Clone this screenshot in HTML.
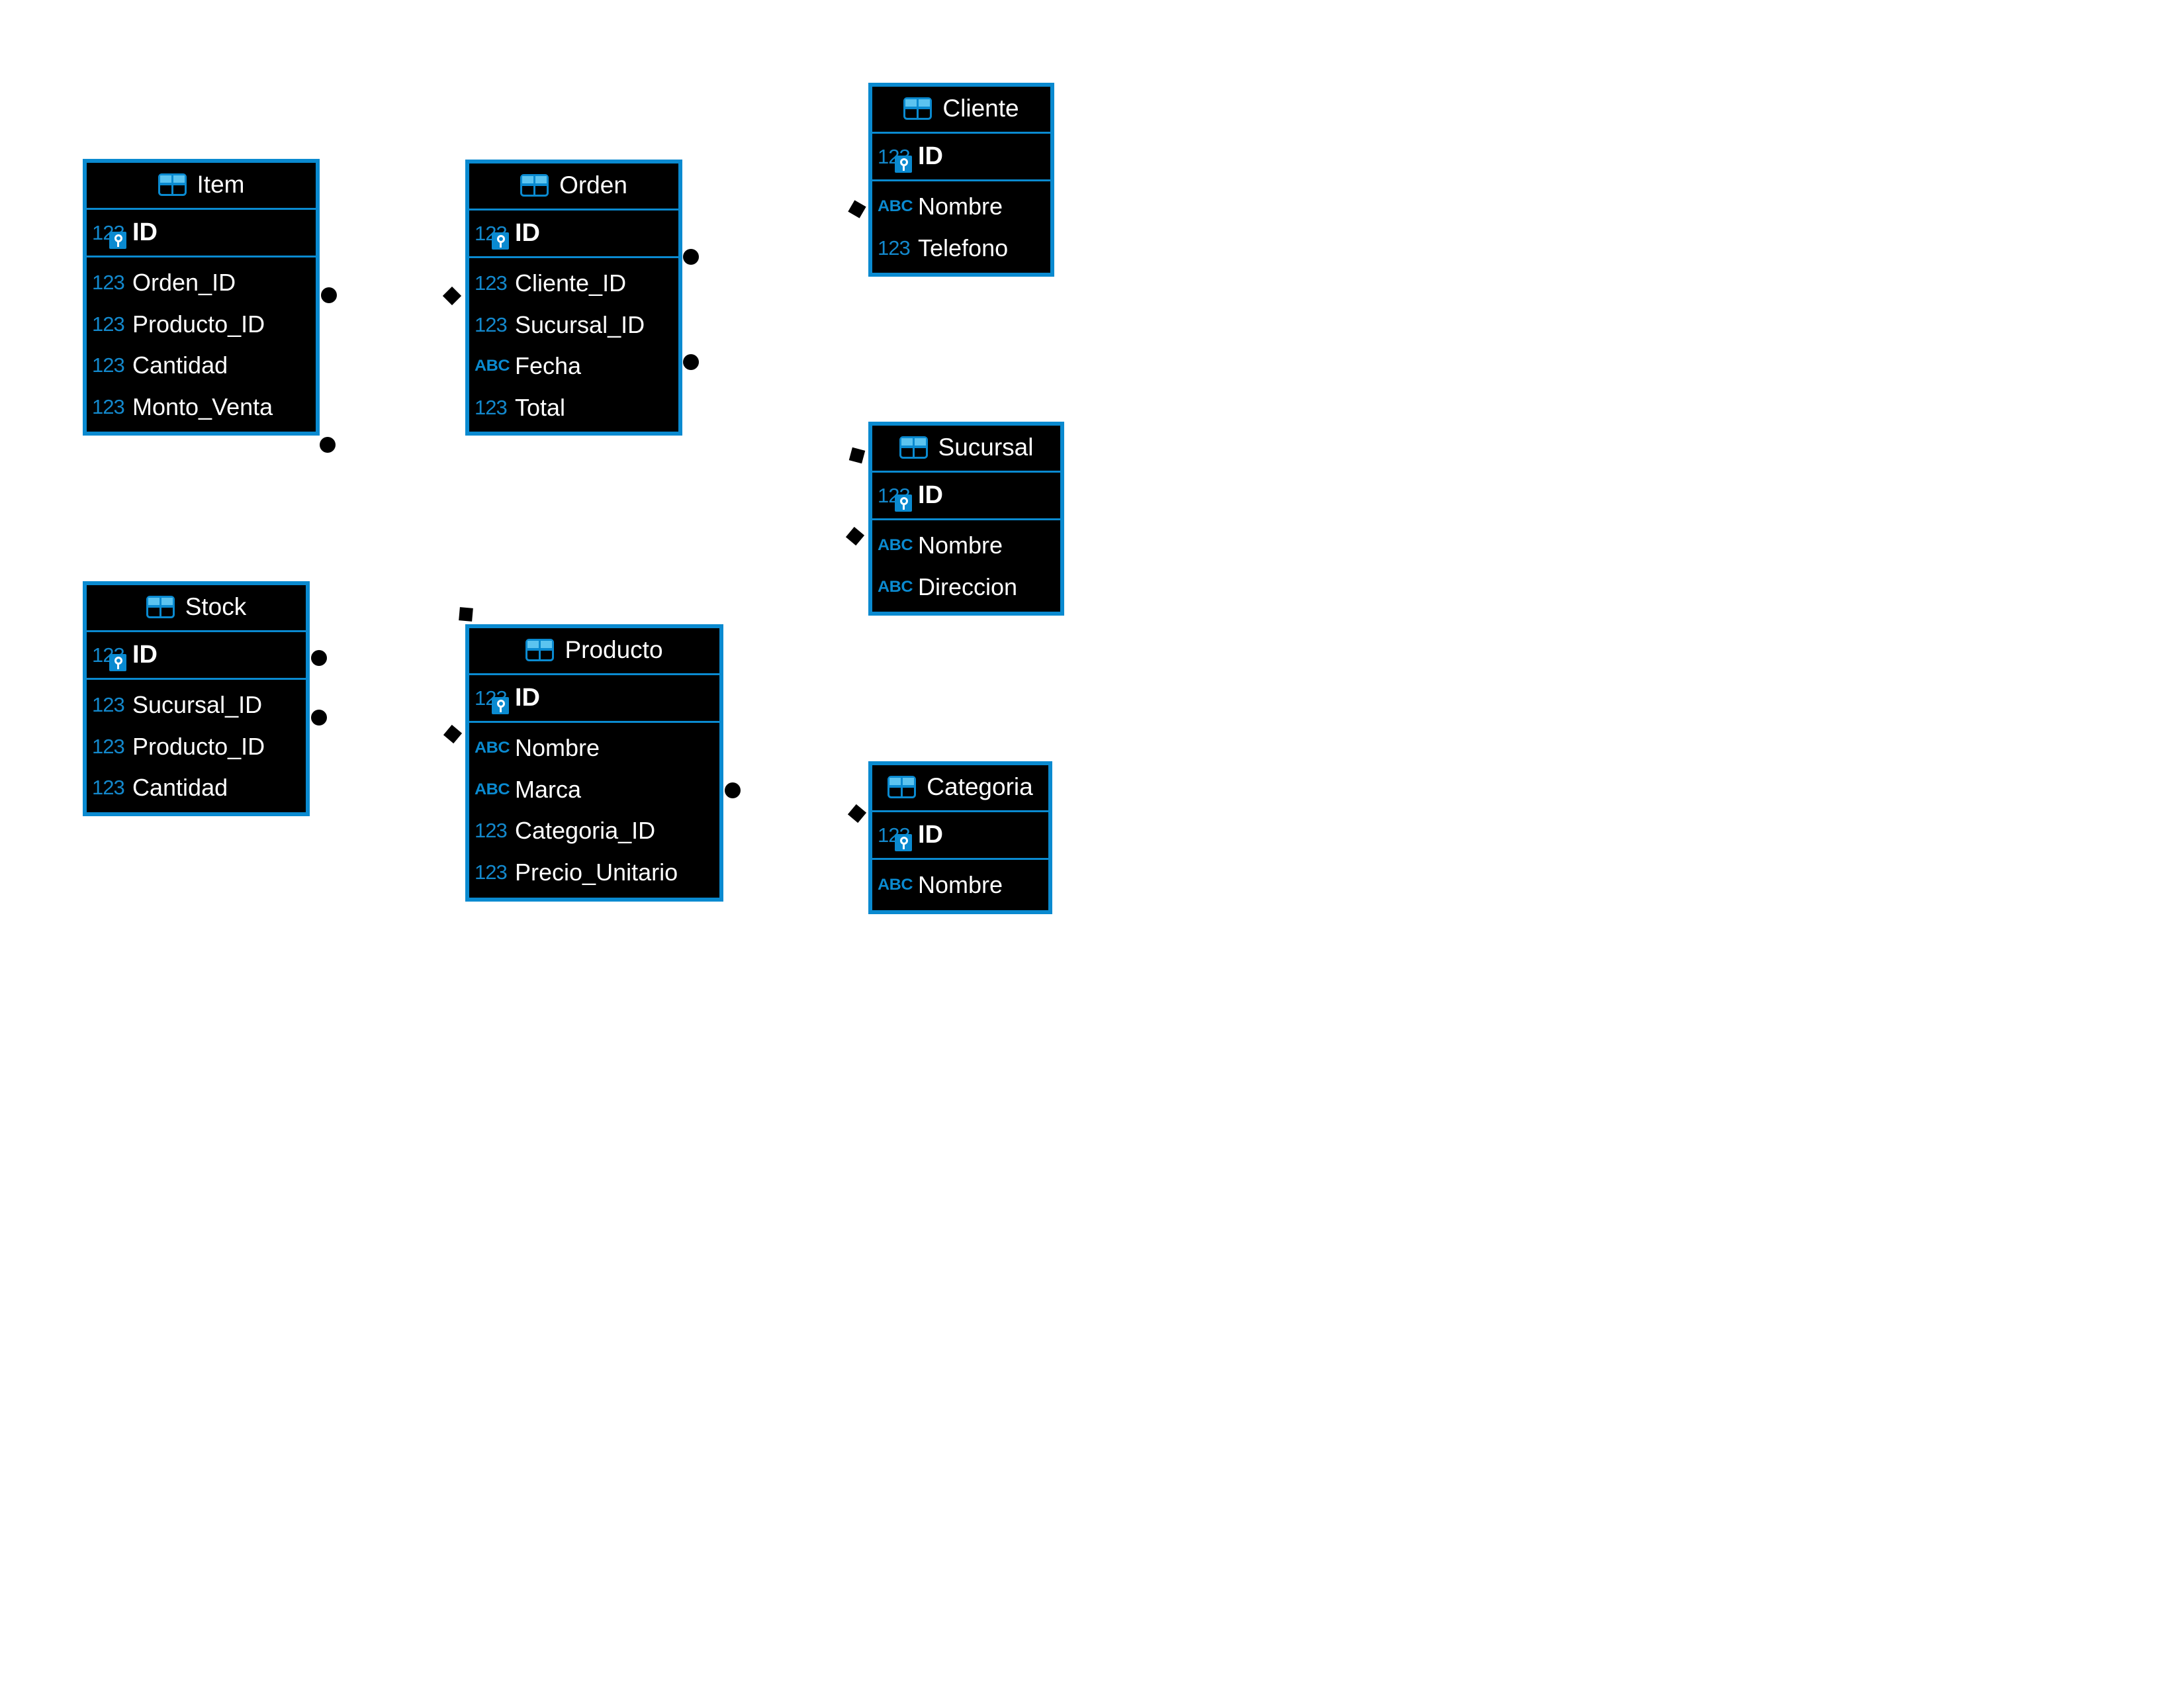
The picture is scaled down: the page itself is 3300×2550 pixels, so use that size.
<!DOCTYPE html>
<html><head><meta charset="utf-8"><style>
*{margin:0;padding:0;box-sizing:border-box}
body{width:3300px;height:2550px;background:#fff;position:relative;overflow:hidden;font-family:"Liberation Sans",sans-serif}
.t{position:absolute;background:#000;border:6px solid #0a8ad0}
.h{height:71px;border-bottom:3px solid #0a8ad0;display:flex;align-items:center;justify-content:center;color:#fff;font-size:37px;gap:16px;padding-bottom:3px}
.ti{width:43px;height:34px;position:relative}
.idr{height:72px;border-bottom:3px solid #0a8ad0;display:flex;align-items:center;padding-left:8px;color:#fff;font-weight:bold;font-size:38px}
.rows{padding-top:7px}
.r{height:62.5px;display:flex;align-items:center;padding-left:8px;color:#fff;font-size:36px;white-space:nowrap}
.n{color:#1388cc;font-size:31px;width:52px;margin-right:9px;letter-spacing:-1px;position:relative;display:inline-block;flex-shrink:0}
.a{color:#0a8ad0;font-size:24px;font-weight:bold;width:52px;margin-right:9px;display:inline-block;flex-shrink:0;letter-spacing:-0.5px;transform:scaleX(1.05);transform-origin:left}
.k{position:absolute;left:26px;top:16px;width:26px;height:26px;background:#0a8ad0;border-radius:2px}
.k:after{content:"";position:absolute;left:8px;top:4px;width:6px;height:6px;border:3px solid #fff;border-radius:50%}
.k:before{content:"";position:absolute;left:12px;top:14px;width:3px;height:9px;background:#fff}
.d{position:absolute;width:24px;height:24px;border-radius:50%;background:#000}
.m{position:absolute;width:20px;height:20px;background:#000;transform:rotate(45deg)}
</style></head><body>
<svg width="0" height="0" style="position:absolute"><defs><symbol id="tb" viewBox="0 0 43 34"><rect x="1.5" y="1.5" width="40" height="31" rx="4" fill="#000" stroke="#0a8ad0" stroke-width="3"/><rect x="3" y="3" width="37" height="12" fill="#5cc4f0"/><rect x="1" y="14" width="41" height="4" fill="#0a8ad0"/><rect x="20" y="1" width="3" height="32" fill="#0a8ad0"/></symbol></defs></svg>

<div class="t" style="left:125px;top:240px;width:358px;height:418px">
<div class="h"><svg class="ti"><use href="#tb"/></svg>Item</div>
<div class="idr"><span class="n" style="font-weight:normal">123<i class="k"></i></span>ID</div>
<div class="rows">
<div class="r"><span class="n">123</span>Orden_ID</div>
<div class="r"><span class="n">123</span>Producto_ID</div>
<div class="r"><span class="n">123</span>Cantidad</div>
<div class="r"><span class="n">123</span>Monto_Venta</div></div></div>

<div class="t" style="left:703px;top:241px;width:328px;height:417px">
<div class="h"><svg class="ti"><use href="#tb"/></svg>Orden</div>
<div class="idr"><span class="n" style="font-weight:normal">123<i class="k"></i></span>ID</div>
<div class="rows">
<div class="r"><span class="n">123</span>Cliente_ID</div>
<div class="r"><span class="n">123</span>Sucursal_ID</div>
<div class="r"><span class="a">ABC</span>Fecha</div>
<div class="r"><span class="n">123</span>Total</div></div></div>

<div class="t" style="left:1312px;top:125px;width:281px;height:293px">
<div class="h"><svg class="ti"><use href="#tb"/></svg>Cliente</div>
<div class="idr"><span class="n" style="font-weight:normal">123<i class="k"></i></span>ID</div>
<div class="rows">
<div class="r"><span class="a">ABC</span>Nombre</div>
<div class="r"><span class="n">123</span>Telefono</div></div></div>

<div class="t" style="left:1312px;top:637px;width:296px;height:293px">
<div class="h"><svg class="ti"><use href="#tb"/></svg>Sucursal</div>
<div class="idr"><span class="n" style="font-weight:normal">123<i class="k"></i></span>ID</div>
<div class="rows">
<div class="r"><span class="a">ABC</span>Nombre</div>
<div class="r"><span class="a">ABC</span>Direccion</div></div></div>

<div class="t" style="left:1312px;top:1150px;width:278px;height:231px">
<div class="h"><svg class="ti"><use href="#tb"/></svg>Categoria</div>
<div class="idr"><span class="n" style="font-weight:normal">123<i class="k"></i></span>ID</div>
<div class="rows">
<div class="r"><span class="a">ABC</span>Nombre</div></div></div>

<div class="t" style="left:125px;top:878px;width:343px;height:355px">
<div class="h"><svg class="ti"><use href="#tb"/></svg>Stock</div>
<div class="idr"><span class="n" style="font-weight:normal">123<i class="k"></i></span>ID</div>
<div class="rows">
<div class="r"><span class="n">123</span>Sucursal_ID</div>
<div class="r"><span class="n">123</span>Producto_ID</div>
<div class="r"><span class="n">123</span>Cantidad</div></div></div>

<div class="t" style="left:703px;top:943px;width:390px;height:419px">
<div class="h"><svg class="ti"><use href="#tb"/></svg>Producto</div>
<div class="idr"><span class="n" style="font-weight:normal">123<i class="k"></i></span>ID</div>
<div class="rows">
<div class="r"><span class="a">ABC</span>Nombre</div>
<div class="r"><span class="a">ABC</span>Marca</div>
<div class="r"><span class="n">123</span>Categoria_ID</div>
<div class="r"><span class="n">123</span>Precio_Unitario</div></div></div>

<div class="d" style="left:485px;top:434px"></div>
<div class="d" style="left:483px;top:660px"></div>
<div class="d" style="left:1032px;top:376px"></div>
<div class="d" style="left:1032px;top:535px"></div>
<div class="d" style="left:470px;top:982px"></div>
<div class="d" style="left:470px;top:1072px"></div>
<div class="d" style="left:1095px;top:1182px"></div>

<div class="m" style="left:673px;top:437px"></div>
<div class="m" style="left:1285px;top:306px;transform:rotate(30deg)"></div>
<div class="m" style="left:1285px;top:678px;transform:rotate(15deg)"></div>
<div class="m" style="left:1282px;top:800px;transform:rotate(40deg)"></div>
<div class="m" style="left:674px;top:1099px;transform:rotate(40deg)"></div>
<div class="m" style="left:1285px;top:1219px;transform:rotate(40deg)"></div>
<div class="m" style="left:694px;top:918px;transform:rotate(5deg)"></div>
</body></html>
